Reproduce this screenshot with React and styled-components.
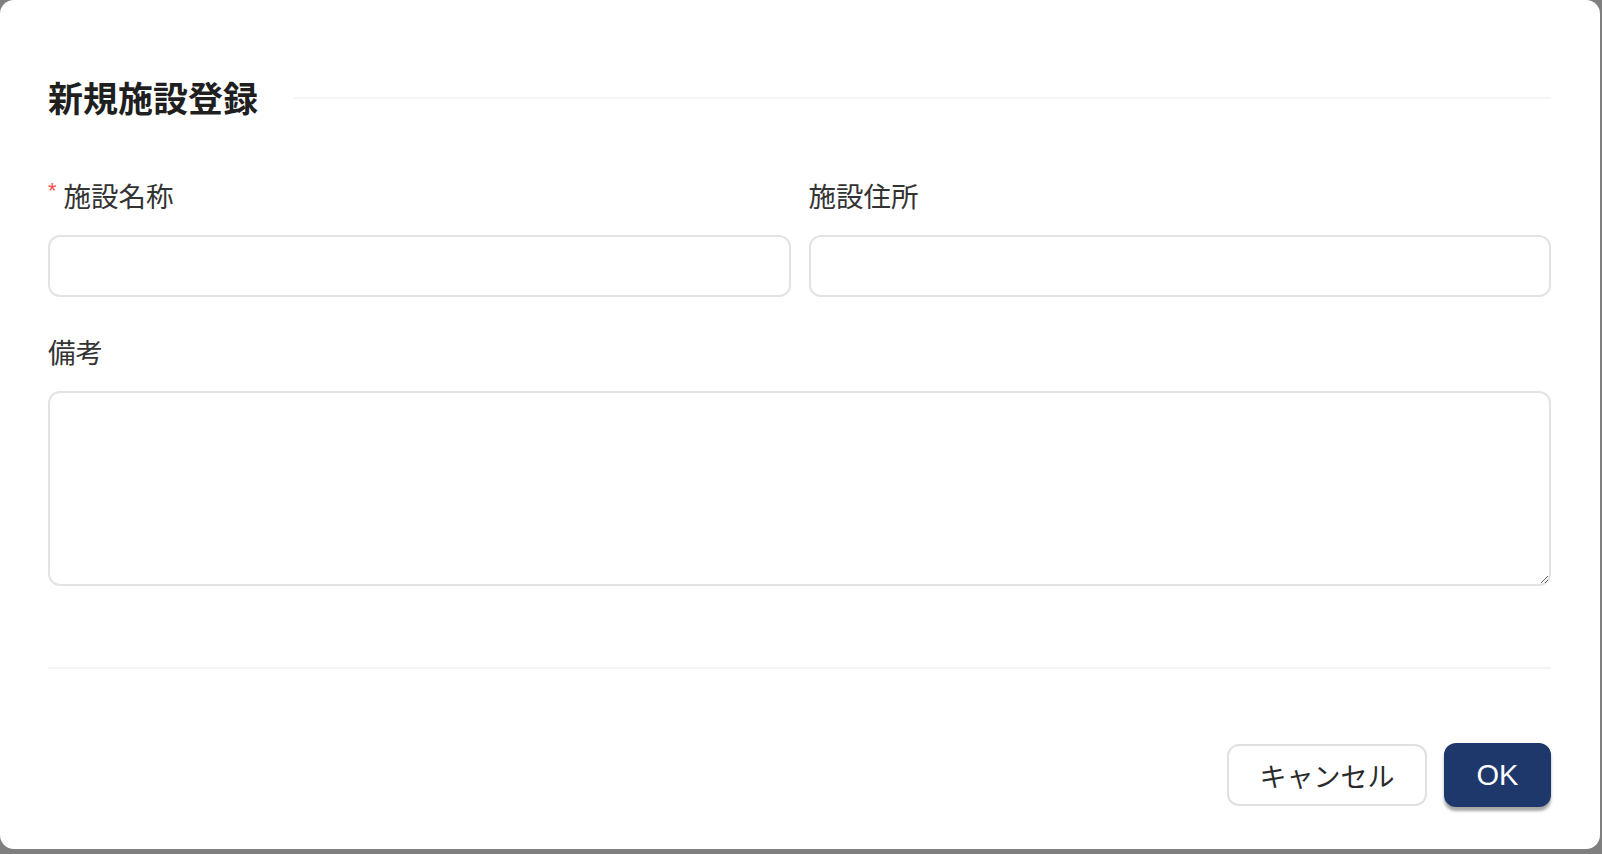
import React from 'react';
import styled, { createGlobalStyle } from 'styled-components';

const GlobalStyle = createGlobalStyle`
    html, body {
        margin: 0;
        padding: 0;
        background: #7f7f7f;
        overflow: hidden;
    }
    body {
        font-family: "Noto Sans CJK JP", "Noto Sans", sans-serif;
    }
`;

const Page = styled.div`
    width: 1602px;
    height: 854px;
    background: #7f7f7f;
`;

const Card = styled.div`
    width: 1600px;
    height: 849px;
    box-sizing: border-box;
    background: #ffffff;
    border-radius: 14px;
    padding: 77px 49px 0 48px;
    display: flex;
    flex-direction: column;
`;

const Header = styled.div`
    display: flex;
    align-items: center;
    height: 40px;
`;

const Title = styled.h2`
    margin: 0 36px 0 0;
    font-size: 35px;
    line-height: 40px;
    font-weight: 700;
    color: #1f1f1f;
    white-space: nowrap;
`;

const TitleLine = styled.div`
    flex: 1;
    height: 2px;
    margin-top: 2px;
    background: #f5f5f5;
`;

const Form = styled.div`
    margin-top: 58px;
    display: flex;
    flex-direction: column;
`;

const Row = styled.div`
    display: grid;
    grid-template-columns: ${p => p.cols === 2 ? '1fr 1fr' : '1fr'};
    column-gap: 18px;
    margin-bottom: ${p => p.gap || 0}px;
`;

const Field = styled.div`
    display: flex;
    flex-direction: column;
`;

const Label = styled.label`
    display: flex;
    align-items: center;
    height: 40px;
    margin-bottom: 20px;
    font-size: 27.5px;
    color: #333333;
`;

const Required = styled.span`
    font-family: "Liberation Sans", sans-serif;
    font-size: 22px;
    color: #ff4d4f;
    margin-right: 7px;
    position: relative;
    top: -4px;
`;

const Input = styled.input`
    box-sizing: border-box;
    height: 62px;
    width: 100%;
    border: 2px solid #e3e3e3;
    border-radius: 12px;
    background: #fff;
    font-size: 27px;
    padding: 0 20px;
    outline: none;
`;

const TextArea = styled.textarea`
    box-sizing: border-box;
    height: 195px;
    width: 100%;
    border: 2px solid #e3e3e3;
    border-radius: 12px;
    background: #fff;
    font-size: 27px;
    padding: 10px 20px;
    outline: none;
    resize: vertical;
    font-family: inherit;
`;

const Divider = styled.div`
    margin-top: 81px;
    height: 2px;
    background: #f3f3f3;
`;

const Footer = styled.div`
    margin-top: 74px;
    display: flex;
    justify-content: flex-end;
    align-items: flex-start;
    gap: 17px;
`;

const Button = styled.button`
    box-sizing: border-box;
    height: ${p => p.primary ? 64 : 62}px;
    padding: 0;
    width: ${p => p.w}px;
    margin-top: ${p => p.primary ? 0 : 1}px;
    border-radius: 12px;
    border: 2px solid ${p => p.primary ? '#1f386b' : '#e0e0e0'};
    background: ${p => p.primary ? '#1f386b' : '#ffffff'};
    color: ${p => p.primary ? '#ffffff' : '#2a2a2a'};
    font-family: ${p => p.primary ? '"Liberation Sans", Arial, sans-serif' : '"Noto Sans CJK JP", sans-serif'};
    font-size: ${p => p.primary ? 29 : 27}px;
    box-shadow: ${p => p.primary ? '0 4px 3px rgba(0, 0, 0, 0.35)' : 'none'};
    cursor: pointer;
`;

export default function App() {
    return (
        <Page>
            <GlobalStyle />
            <Card>
                <Header>
                    <Title>新規施設登録</Title>
                    <TitleLine />
                </Header>
                <Form>
                    <Row cols={2} gap={34}>
                        <Field>
                            <Label><Required>*</Required>施設名称</Label>
                            <Input />
                        </Field>
                        <Field>
                            <Label>施設住所</Label>
                            <Input />
                        </Field>
                    </Row>
                    <Row cols={1}>
                        <Field>
                            <Label>備考</Label>
                            <TextArea />
                        </Field>
                    </Row>
                </Form>
                <Divider />
                <Footer>
                    <Button w={200}>キャンセル</Button>
                    <Button primary w={107}>OK</Button>
                </Footer>
            </Card>
        </Page>
    );
}
